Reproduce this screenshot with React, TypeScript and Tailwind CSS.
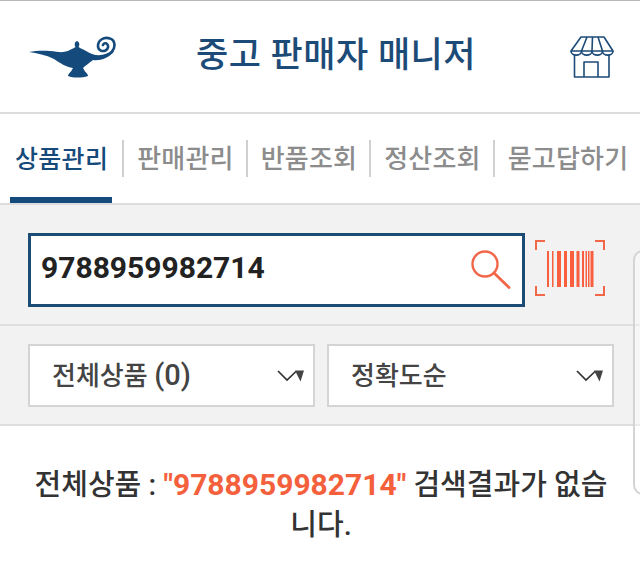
import type { ReactNode } from "react";

const font = "font-['Roboto','Noto_Sans_CJK_KR',sans-serif]";

function Lamp() {
  return (
    <svg width="88" height="42" viewBox="0 -1 88 42" fill="none" className="block">
      <path d="M0 15C7 13.5 15 13.5 21 14C27 14.5 31 15.5 34 15C38 14.5 41 13 44 11.5L46.5 10C45 8 45.5 5 48 4C50.5 5 51 8 49.5 10L52 11.5C56 13 59 15.5 63 17C70 19.5 78 18 83 13L85 14.5C80 21 71 24 64 23C60 26 56 29 54 31L56 34.5C58 36 59 38 59 39C53 41 44 41 39 39C39 38 40 36 42 34.5L44 31C37 30 31 26 25 22C17 18 8 16 0 15Z" fill="#144a7c" />
      <path d="M83 14.5C87 10 86 3 81 1.5C75 -0.5 69 3 69 9C69 13 73 15 76.5 13.5C79.5 12 80 8 77.5 6.5C76 5.8 74.5 6.5 74 8" stroke="#144a7c" strokeWidth="2.6" strokeLinecap="round" />
    </svg>
  );
}

function Shop() {
  return (
    <svg width="44" height="42" viewBox="0 0 44 42" fill="none" stroke="#1c4b78" strokeWidth="1.6" strokeLinejoin="round" className="block">
      <path d="M11 1H34L43 15H1L11 1Z" />
      <path d="M1 15C1 20.5 11.5 20.5 11.5 15C11.5 20.5 22 20.5 22 15C22 20.5 32.5 20.5 32.5 15C32.5 20.5 43 20.5 43 15" />
      <path d="M17 1L11.5 15M22.5 1L22 15M28 1L32.5 15" />
      <path d="M4.5 19V41H39V19" />
      <path d="M14 41V26H28V41" />
    </svg>
  );
}

function Search() {
  return (
    <svg width="40" height="40" viewBox="0 0 40 40" fill="none" stroke="#f2664a" strokeLinecap="round" className="block">
      <circle cx="14" cy="14" r="12.5" strokeWidth="2.4" />
      <path d="M23 23L38 37.5" strokeWidth="2.8" />
    </svg>
  );
}

function Barcode() {
  const bars = [[0, 2], [5, 1.5], [10, 4], [17, 3], [23, 4], [29.5, 3], [35, 2], [38.5, 1.5], [41, 1.5], [43.5, 3]];
  return (
    <svg width="70" height="56" viewBox="0 0 70 56" fill="none" className="block mt-[35px]">
      <path d="M10 1H1V10M60 1H69V10M10 55H1V46M60 55H69V46" stroke="#f2664a" strokeWidth="2" />
      {bars.map(([x, w]) => (
        <rect key={x} x={12 + x} y="11" width={w} height="36" fill="#f95f3e" />
      ))}
    </svg>
  );
}

function Caret() {
  return (
    <svg width="27" height="12" viewBox="0 0 27 12" className="block">
      <path d="M1 1L10 10L19 1.5" fill="none" stroke="#333" strokeWidth="1.7" />
      <path d="M18 0.5H27L23.5 11.5Z" fill="#444" />
    </svg>
  );
}

function Tab({ label, active, first }: { label: string; active?: boolean; first?: boolean }) {
  return (
    <div className={`flex items-center ${first ? "mr-[2px]" : "before:content-[''] before:w-[2px] before:h-[37px] before:bg-[#d0d0d0] before:mr-[13px]"}`}>
      <span className={`pt-[2px] font-medium whitespace-nowrap leading-[35px] ${active ? "text-[25px] tracking-[0.3px] text-[#164a7a]" : "text-[26px] tracking-[0.2px] text-[#8c8c8c]"}`}>{label}</span>
    </div>
  );
}

function Select({ children }: { children: ReactNode }) {
  return (
    <div className="flex-1 h-[63px] bg-white border-2 border-[#d4d4d4] flex items-center justify-between pl-[22px] pr-[9px]">
      <span className="pt-[1px] text-[26px] text-[#444444] font-medium">{children}</span>
      <Caret />
    </div>
  );
}

export default function App() {
  return (
    <div className={`${font} relative w-[640px] h-[575px] overflow-hidden bg-white`}>
      <header className="h-[114px] border-t border-b-2 border-t-[#b8b8b8] border-b-[#dcdcdc] flex items-center pl-[29px] pr-[26px]">
        <Lamp />
        <h1 className="ml-[79px] text-[35px] font-medium text-[#1c4b78] tracking-[0.5px]">중고 판매자 매니저</h1>
        <div className="ml-auto"><Shop /></div>
      </header>
      <nav className="relative h-[91px] border-b-2 border-[#dcdcdc] flex items-center gap-[12px] pl-[15px]">
        <Tab label="상품관리" active first />
        <Tab label="판매관리" />
        <Tab label="반품조회" />
        <Tab label="정산조회" />
        <Tab label="묻고답하기" />
        <div className="absolute left-[10px] bottom-0 w-[102px] h-[6px] bg-[#144a7c]" />
      </nav>
      <section className="bg-[#f2f2f2]">
        <div className="h-[121px] border-b-2 border-[#dedede] flex items-start gap-[10px] pl-[28px]">
          <div className="mt-[28px] w-[497px] h-[74px] bg-white border-[3px] border-[#1c4b75] flex items-center justify-between pl-[10px] pr-[11px]">
            <span className="pb-[5px] text-[30px] font-bold text-[#222222]">9788959982714</span>
            <Search />
          </div>
          <Barcode />
        </div>
        <div className="h-[100px] border-b-2 border-[#dedede] flex items-start gap-[12px] pt-[18px] pl-[28px] pr-[26px]">
          <Select>전체상품 <span className="text-[29px]">(0)</span></Select>
          <Select>정확도순</Select>
        </div>
      </section>
      <p className="pt-[39px] pl-[27px] pr-[25px] text-center text-[29px] leading-[40px] font-medium text-[#333333]">
        전체상품 : <span className="text-[#f4603c] text-[30px] font-bold">"9788959982714"</span> 검색결과가 없습니다.
      </p>
      <div className="absolute left-[633px] top-[250px] w-[20px] h-[245px] rounded-l-[10px] border-2 border-[#d4d4d4] bg-white/40" />
    </div>
  );
}
